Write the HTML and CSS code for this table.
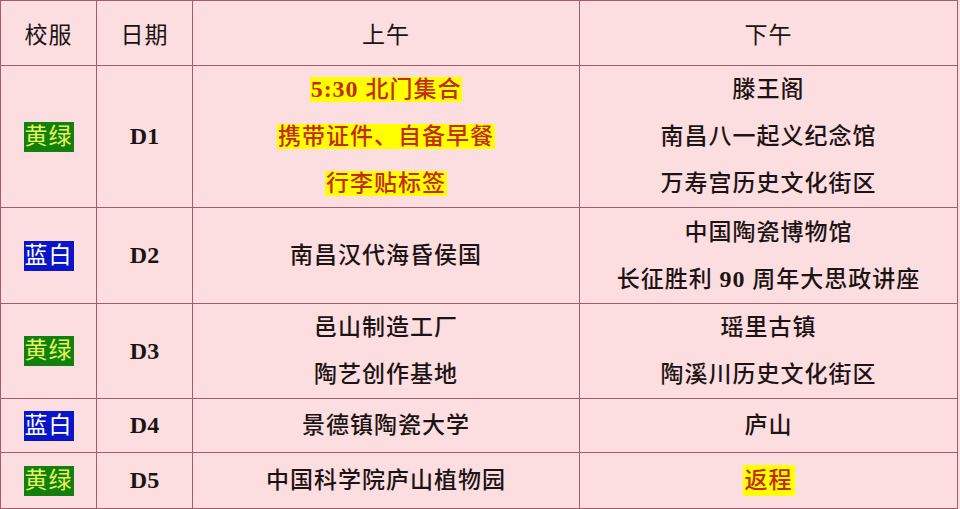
FILE: index.html
```html
<!DOCTYPE html>
<html lang="zh-CN">
<head>
<meta charset="utf-8">
<title>行程安排</title>
<link rel="stylesheet" href="styles.css">
</head>
<body>
<div class="schedule">
  <div class="cell head">校服</div>
  <div class="cell head">日期</div>
  <div class="cell head">上午</div>
  <div class="cell head">下午</div>

  <div class="cell"><span class="badge green">黄绿</span></div>
  <div class="cell day">D1</div>
  <div class="cell lines">
    <span class="line"><span class="mark"><span class="num">5:30</span> 北门集合</span></span>
    <span class="line"><span class="mark">携带证件、自备早餐</span></span>
    <span class="line"><span class="mark">行李贴标签</span></span>
  </div>
  <div class="cell lines">
    <span class="line">滕王阁</span>
    <span class="line">南昌八一起义纪念馆</span>
    <span class="line">万寿宫历史文化街区</span>
  </div>

  <div class="cell"><span class="badge blue">蓝白</span></div>
  <div class="cell day">D2</div>
  <div class="cell lines"><span class="line">南昌汉代海昏侯国</span></div>
  <div class="cell lines">
    <span class="line">中国陶瓷博物馆</span>
    <span class="line">长征胜利 <span class="num">90</span> 周年大思政讲座</span>
  </div>

  <div class="cell"><span class="badge green">黄绿</span></div>
  <div class="cell day">D3</div>
  <div class="cell lines">
    <span class="line">邑山制造工厂</span>
    <span class="line">陶艺创作基地</span>
  </div>
  <div class="cell lines">
    <span class="line">瑶里古镇</span>
    <span class="line">陶溪川历史文化街区</span>
  </div>

  <div class="cell"><span class="badge blue">蓝白</span></div>
  <div class="cell day">D4</div>
  <div class="cell lines"><span class="line">景德镇陶瓷大学</span></div>
  <div class="cell lines"><span class="line">庐山</span></div>

  <div class="cell"><span class="badge green">黄绿</span></div>
  <div class="cell day">D5</div>
  <div class="cell lines"><span class="line">中国科学院庐山植物园</span></div>
  <div class="cell lines"><span class="line"><span class="mark tall">返程</span></span></div>
</div>
</body>
</html>
```

FILE: styles.css
```css
html, body {
  margin: 0;
  padding: 0;
  background: #fcdde0;
}

body {
  font-family: "Liberation Serif", "Noto Sans CJK SC", serif;
  color: #1c1414;
}

.schedule {
  display: grid;
  grid-template-columns: 95px 95px 386px 377px;
  grid-template-rows: 64px 141px 95px 94px 53px 55px;
  gap: 1px;
  padding: 1px;
  width: max-content;
  background: #a45c6c;
}

.cell {
  background: #fcdde0;
  display: flex;
  align-items: center;
  justify-content: center;
  text-align: center;
  font-size: 23px;
  font-weight: 500;
  letter-spacing: 1px;
}

.head {
  font-weight: 400;
  font-size: 23px;
}

.lines {
  flex-direction: column;
}

.line {
  display: block;
  line-height: 47px;
}

.num {
  font-weight: 700;
  font-size: 24px;
}

.day {
  font-size: 24px;
  font-weight: 700;
  letter-spacing: 0;
}

.mark {
  background: #ffff00;
  color: #c42a12;
  padding: 0 1px;
}

.mark.tall {
  padding: 3px 2px;
}

.badge {
  display: inline-block;
  width: 50px;
  height: 30px;
  line-height: 30px;
  font-weight: 400;
  font-size: 23px;
  letter-spacing: 1px;
}

.green {
  background: #12800e;
  color: #e4f45c;
}

.blue {
  background: #0a14c8;
  color: #ffffff;
}
```
